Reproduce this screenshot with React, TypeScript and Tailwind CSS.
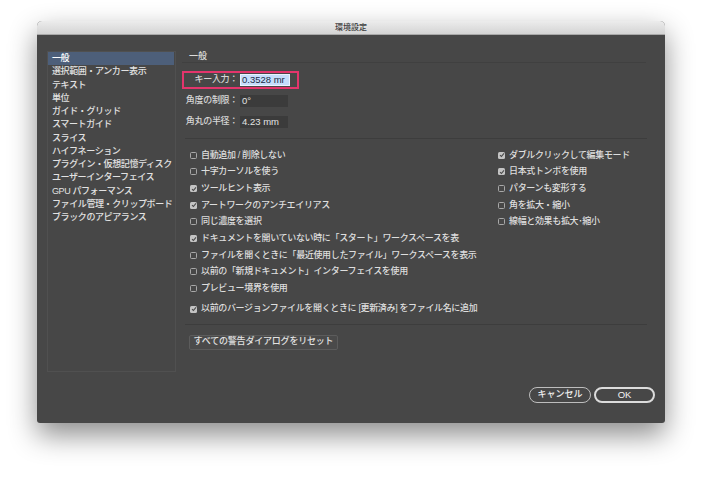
import React from "react";

const FONT = { fontFamily: '"Liberation Sans", "Noto Sans CJK JP", sans-serif' };

const sidebarItems = [
  "一般",
  "選択範囲・アンカー表示",
  "テキスト",
  "単位",
  "ガイド・グリッド",
  "スマートガイド",
  "スライス",
  "ハイフネーション",
  "プラグイン・仮想記憶ディスク",
  "ユーザーインターフェイス",
  "GPU パフォーマンス",
  "ファイル管理・クリップボード",
  "ブラックのアピアランス",
];

const leftChecks: [string, boolean][] = [
  ["自動追加 / 削除しない", false],
  ["十字カーソルを使う", false],
  ["ツールヒント表示", true],
  ["アートワークのアンチエイリアス", true],
  ["同じ濃度を選択", false],
  ["ドキュメントを開いていない時に「スタート」ワークスペースを表", true],
  ["ファイルを開くときに「最近使用したファイル」ワークスペースを表示", false],
  ["以前の「新規ドキュメント」インターフェイスを使用", false],
  ["プレビュー境界を使用", false],
];

const rightChecks: [string, boolean][] = [
  ["ダブルクリックして編集モード", true],
  ["日本式トンボを使用", true],
  ["パターンも変形する", false],
  ["角を拡大・縮小", false],
  ["線幅と効果も拡大･縮小", false],
];

function Box({ checked }: { checked: boolean }) {
  return checked ? (
    <span className="w-[7px] h-[7px] rounded-[1.5px] bg-[#c4c4c4] flex items-center justify-center shrink-0">
      <svg width="6" height="6" viewBox="0 0 6 6">
        <path d="M1 3.1 L2.4 4.5 L5 1.3" stroke="#4a4a4a" strokeWidth="1.1" fill="none" />
      </svg>
    </span>
  ) : (
    <span className="w-[7px] h-[7px] rounded-[1.5px] border border-[#a8a8a8] shrink-0" />
  );
}

function Check({ label, checked }: { label: string; checked: boolean }) {
  return (
    <div className="h-[16.67px] flex items-center gap-[4px] text-[9px] font-medium tracking-[-0.35px] text-[#dedede] whitespace-nowrap">
      <Box checked={checked} />
      <span>{label}</span>
    </div>
  );
}

export default function App() {
  return (
    <div className="w-[703px] h-[477px] bg-white pt-[21px] pl-[37px] overflow-hidden" style={FONT}>
      <div className="w-[628px] h-[402px] bg-[#474747] rounded-t-[5px] rounded-b-[3px] shadow-[0_12px_28px_rgba(0,0,0,0.45)] flex flex-col">
        <div className="h-[14px] rounded-t-[5px] bg-gradient-to-b from-[#ececec] to-[#d4d4d4] border-b border-[#a9a9a9] flex items-center justify-center text-[8px] font-medium text-[#3c3c3c]">
          環境設定
        </div>
        <div className="flex-1 pt-[16px] px-[10px] flex flex-col">
          <div className="flex">
            <div className="w-[129px] h-[321px] border border-[#505050]">
              {sidebarItems.map((it, i) => (
                <div
                  key={it}
                  className={
                    "h-[13.25px] leading-[13.25px] pl-[4px] text-[9px] font-medium tracking-[-0.4px] whitespace-nowrap " +
                    (i === 0 ? "bg-[#4d5f7a] text-white mr-[1px]" : "text-[#e2e2e2]")
                  }
                >
                  {it}
                </div>
              ))}
            </div>
            <div className="ml-[6px] w-[464px] flex flex-col">
              <div className="h-[12px] border-b border-[#404040] pl-[7px] text-[9px] font-medium leading-[11px] text-[#dcdcdc]">
                一般
              </div>
              <div className="mt-[8px] w-[117px] h-[18px] border-2 border-[#e3356c] flex items-center">
                <span className="w-[54px] text-right text-[9px] font-medium tracking-[-0.3px] text-[#d6d6d6] whitespace-nowrap">キー入力：</span>
                <span className="ml-[2px] w-[50px] h-[12px] bg-[#c5ddfb] border border-[#eaf2ff] text-[9.5px] leading-[10px] text-[#1b2a44] pl-[1px] overflow-hidden whitespace-nowrap">
                  0.3528 mr
                </span>
              </div>
              <div className="mt-[6px] h-[12px] flex items-center">
                <span className="w-[56px] text-right text-[9px] font-medium tracking-[-0.3px] text-[#d6d6d6] whitespace-nowrap">角度の制限：</span>
                <span className="ml-[2px] w-[48px] h-[12px] bg-[#3b3b3b] text-[9.5px] leading-[12px] text-[#e4e4e4] pl-[2px]">0°</span>
              </div>
              <div className="mt-[9px] h-[12px] flex items-center">
                <span className="w-[56px] text-right text-[9px] font-medium tracking-[-0.3px] text-[#d6d6d6] whitespace-nowrap">角丸の半径：</span>
                <span className="ml-[2px] w-[48px] h-[12px] bg-[#3b3b3b] text-[9.5px] leading-[12px] text-[#e4e4e4] pl-[2px]">4.23 mm</span>
              </div>
              <div className="mt-[10px] ml-[3px] w-[462px] border-b border-[#3d3d3d]" />
              <div className="mt-[8px] flex pl-[8px]">
                <div className="w-[308px] flex flex-col">
                  {leftChecks.map(([l, c]) => (
                    <Check key={l} label={l} checked={c} />
                  ))}
                </div>
                <div className="flex flex-col">
                  {rightChecks.map(([l, c]) => (
                    <Check key={l} label={l} checked={c} />
                  ))}
                </div>
              </div>
              <div className="mt-[4px] pl-[8px]">
                <Check label="以前のバージョンファイルを開くときに [更新済み] をファイル名に追加" checked={true} />
              </div>
              <div className="mt-[6px] ml-[3px] w-[462px] border-b border-[#3d3d3d]" />
              <div className="mt-[10px] pl-[7px]">
                <button className="w-[149px] h-[15px] rounded-[2px] border border-[#5c5c5c] bg-[#4a4a4a] text-[9px] font-medium tracking-[-0.2px] text-[#e2e2e2] flex items-center justify-center">
                  すべての警告ダイアログをリセット
                </button>
              </div>
            </div>
          </div>
          <div className="mt-[15px] flex justify-end gap-[3px]">
            <button className="w-[62px] h-[16px] rounded-full border border-[#bdbdbd] text-[9px] font-medium text-[#f0f0f0] flex items-center justify-center">
              キャンセル
            </button>
            <button className="w-[61px] h-[16px] rounded-full border-2 border-[#dcdcdc] text-[9.5px] font-medium text-[#f4f4f4] flex items-center justify-center">
              OK
            </button>
          </div>
        </div>
      </div>
    </div>
  );
}
